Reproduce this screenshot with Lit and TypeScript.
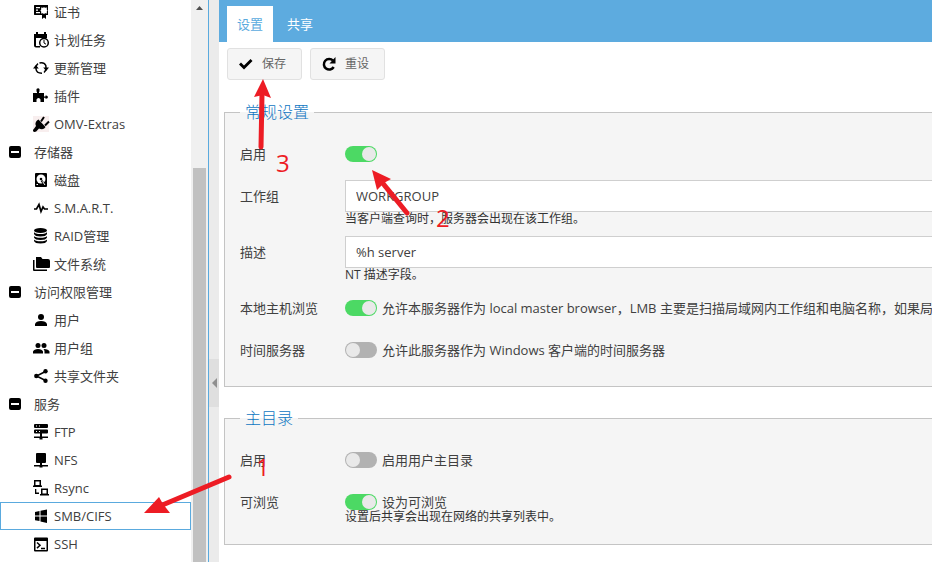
import { LitElement, html, css, svg, nothing } from "lit";
import { customElement, property, state } from "lit/decorators.js";
import { classMap } from "lit/directives/class-map.js";

const icons: Record<string, unknown> = {
  cert: svg`<path fill-rule="evenodd" d="M1.500 1h13.500v10h-2v4l-2-1.500-2 1.500v-4H1.500Q1 11 1 10V2q0-1 .500-1zM3 3v1.200h4V3zM3 5.500v1.200h2V5.500zM3 8v1.200h4V8zM11 3.200 9.800 3.800 8 3.500 8.300 5.200 7.400 6.500 8.300 7.800 8 9.500 9.800 9.200 11 10 12.200 9.200 14 9.500 13.700 7.800 14.500 6.500 13.700 5.200 14 3.500 12.200 3.800z"/>`,
  calendar: svg`<path d="M1 2h2V0h2v2h6V0h2v2h1v4H3v8h4v1.500H3q-2 0-2-2z"/><circle cx="11" cy="10.800" r="4.300" fill="#fff" stroke="#000" stroke-width="1.500"/><path d="M11 8v3l2 1.200" fill="none" stroke="#000"/>`,
  refresh: svg`<path d="M6.500 3Q11 1.800 12.800 5.500L13 8M3 8V9q.500 4.300 6 4.200M3 8Q3 5 5 3.700M13 8q0 3-2 4.500" fill="none" stroke="#000" stroke-width="1.500" stroke-dasharray="none"/><path d="M0 8.500 2.800 5 5.800 8.500zM10.200 7.500H16L13.200 11z"/>`,
  puzzle: svg`<path d="M0 5h4V3.800H3.500V1q1.700-1.500 3 0v2.800H6V5h5v3.500h1.500v-1q2-.500 2.500 1.500 0 2-2.500 1.800V9.800H11V14H7.500v-2.500q-.500-1.500-2-1.500T3.500 11.500V14H0z"/>`,
  plug: svg`<path fill="#f8eeee" d="M0 0h16v16H0z"/><path d="m4 4.500 1.500-1 7 7.500-1 1.300Q9 14 6 12.500L3.200 15.500Q1 16.500 0 15q-.200-1.500 1-2.200L3 10Q1.500 7 4 4.500z"/><path d="M8 5.500 11 1M12 9.500l4-4" fill="none" stroke="#000" stroke-width="2"/>`,
  minus: svg`<path fill-rule="evenodd" d="M4 2h8q2 0 2 2v8q0 2-2 2H4q-2 0-2-2V4q0-2 2-2zM4 7v2h8V7z"/>`,
  disk: svg`<rect x="2" y="1" width="12" height="14" rx="1"/><circle cx="8" cy="7" r="4.500" fill="#fff"/><circle cx="8" cy="7" r="1.300"/><path d="m8.500 8.500 3.500 5" stroke="#000" stroke-width="2"/><path d="M3.500 12.500h1.500M12 13l-2.500-3.500" stroke="#fff"/>`,
  pulse: svg`<path d="M1 9h2.500L6 4.500 8 11.500 10 7l1.500 2H15" fill="none" stroke="#000" stroke-width="1.700"/>`,
  database: svg`<ellipse cx="7.500" cy="2.500" rx="6.500" ry="2.500"/><path d="M1 4q1 2 6.500 2T14 4v2q-1 2.500-6.500 2.500T1 6zM1 8q1 1.800 6.500 1.800T14 8v1.500q-1 2.500-6.500 2.500T1 9.500zM1 11.500q1 1.800 6.500 1.800T14 11.500V13q-1 2.500-6.500 2.500T1 13z"/>`,
  folders: svg`<path d="M3 1h5l1.500 2H15q2 0 2 2v6q0 1-1 1H4q-1 0-1-1zM0 4h1.500v9.500H14V15H1q-1 0-1-1z"/>`,
  user: svg`<circle cx="8" cy="5" r="3"/><path d="M2 14v-2q1-3 6-3t6 3v2z"/>`,
  users: svg`<circle cx="5" cy="5.500" r="2.500"/><circle cx="11" cy="5.500" r="2.500"/><path d="M0 13.500v-2Q1 9 5 9t5 2.500v2zM11 9q4.500 0 5.500 2.500v2h-5v-2Q11.500 10 10.500 9z"/>`,
  share: svg`<path d="M12.500 3.500 3.500 8l9 4.500" fill="none" stroke="#000" stroke-width="1.500"/><circle cx="12.500" cy="3.200" r="2.200"/><circle cx="3.300" cy="8" r="2.200"/><circle cx="12.500" cy="12.800" r="2.200"/>`,
  servers: svg`<path fill-rule="evenodd" d="M2 0h12q1 0 1 1v2q0 1-1 1H2Q1 4 1 3V1q0-1 1-1zM3 1.500v1h1v-1zM6 1.500v1h1v-1zM2 5.500h12q1 0 1 1v2q0 1-1 1H9v3h6V14H9.500v1.500h-3V14H1v-1.500h6v-3H2q-1 0-1-1v-2q0-1 1-1zM3 7v1h1V7zM6 7v1h1V7z"/>`,
  nfs: svg`<path d="M4 1h8q1 0 1 1v8q0 1-1 1H9v2h6v1.500H9.500v1h-3v-1H1V13h6v-2H4q-1 0-1-1V2q0-1 1-1z"/>`,
  rsync: svg`<path fill-rule="evenodd" d="M1 0h7v5.500h1V7H0V5.500h1zM2.500 1.500V5h4V1.500zM8 8.500h7V14h1v1.500H7V14h1zM9.500 10v3.500h4V10zM2 9h1.300v3.500H6V14H2z"/>`,
  windows: svg`<path d="M2 4l4.500-1v4.500H2zM7.500 2.800 14 1.500v6H7.500zM2 8.500h4.500V13L2 12.200zM7.500 8.500H14V15l-6.500-1.500z"/>`,
  terminal: svg`<path fill-rule="evenodd" d="M2 1.500h12q1 0 1 1v12q0 1-1 1H2q-1 0-1-1v-12q0-1 1-1zM2.500 5v9h11V5z"/><path d="m4 6.500 3 2.800-3 2.800M8 12.500h4" fill="none" stroke="#000" stroke-width="1.500"/>`,
  check: svg`<path d="M1 8.500 3 6.500l3 3L12.500 3l2 2L6 13.500z"/>`,
  reset: svg`<path d="M12 4.500A5.300 5.300 0 1 0 12.700 11" fill="none" stroke="#000" stroke-width="2.500"/><path d="M14.500 1v6.500H8.500z"/>`,
};

const icon = (name: string) =>
  html`<svg class="icon" viewBox="0 0 16 16" aria-hidden="true">${icons[name]}</svg>`;

interface Item {
  icon: string;
  text: string;
  group?: boolean;
}

const items: Item[] = [
  { icon: "cert", text: "证书" },
  { icon: "calendar", text: "计划任务" },
  { icon: "refresh", text: "更新管理" },
  { icon: "puzzle", text: "插件" },
  { icon: "plug", text: "OMV-Extras" },
  { icon: "minus", text: "存储器", group: true },
  { icon: "disk", text: "磁盘" },
  { icon: "pulse", text: "S.M.A.R.T." },
  { icon: "database", text: "RAID管理" },
  { icon: "folders", text: "文件系统" },
  { icon: "minus", text: "访问权限管理", group: true },
  { icon: "user", text: "用户" },
  { icon: "users", text: "用户组" },
  { icon: "share", text: "共享文件夹" },
  { icon: "minus", text: "服务", group: true },
  { icon: "servers", text: "FTP" },
  { icon: "nfs", text: "NFS" },
  { icon: "rsync", text: "Rsync" },
  { icon: "windows", text: "SMB/CIFS" },
  { icon: "terminal", text: "SSH" },
];

const base = css`
  * {
    box-sizing: border-box;
  }
  button,
  input {
    font: inherit;
    color: inherit;
    margin: 0;
  }
  .icon {
    width: 16px;
    height: 16px;
    flex: none;
    overflow: visible;
  }
`;

@customElement("nav-tree")
class NavTree extends LitElement {
  @state() selected = "SMB/CIFS";

  static styles = [
    base,
    css`
      :host {
        display: flex;
        flex: none;
        width: 209px;
        overflow: hidden;
        border-right: 1px solid #5aaade;
        background: #fff;
      }
      .tree {
        flex: 1;
        list-style: none;
        margin: -2px 0 0;
        padding: 0;
      }
      .row {
        display: flex;
        align-items: center;
        gap: 5px;
        width: 100%;
        height: 28px;
        padding: 0 0 0 32px;
        border: 1px solid transparent;
        background: none;
        color: #404040;
        text-decoration: none;
        text-align: left;
        white-space: nowrap;
      }
      .group {
        padding-left: 6px;
        gap: 11px;
      }
      .selected {
        border-color: #5aaade;
      }
      .bar {
        width: 17px;
        padding: 0 2px;
        background: #f0f0f0;
        display: flex;
        flex-direction: column;
        align-items: center;
      }
      .up {
        width: 7px;
        height: 4px;
        margin: 6px 0 0;
        background: #505050;
        clip-path: polygon(50% 0, 100% 100%, 0 100%);
      }
      .thumb {
        width: 13px;
        flex: 1;
        margin-top: 158px;
        background: #c1c1c1;
      }
    `,
  ];

  render() {
    return html`
      <ul class="tree">
        ${items.map((it) =>
          it.group
            ? html`<li><button class="row group" type="button" aria-expanded="true">${icon(it.icon)}<span>${it.text}</span></button></li>`
            : html`<li>
                <a
                  href="#"
                  class=${classMap({ row: true, selected: it.text === this.selected })}
                  @click=${(e: Event) => {
                    e.preventDefault();
                    this.selected = it.text;
                  }}
                  >${icon(it.icon)}<span>${it.text}</span></a
                >
              </li>`
        )}
      </ul>
      <div class="bar"><div class="up"></div><div class="thumb"></div></div>
    `;
  }
}

@customElement("form-row")
class FormRow extends LitElement {
  @property() label = "";
  @property() value = "";
  @property() hint = "";
  @property() text = "";
  @property({ type: Boolean }) toggle = false;
  @property({ type: Boolean }) on = false;

  static styles = [
    base,
    css`
      :host {
        display: flex;
      }
      .label {
        flex: none;
        width: 105px;
        line-height: 32px;
      }
      .field {
        flex: 1;
        white-space: nowrap;
      }
      .input {
        display: block;
        width: 100%;
        height: 32px;
        padding: 0 10px;
        border: 1px solid #cfcfcf;
        background: #fff;
      }
      .hint {
        font-size: 12px;
        line-height: 14px;
        color: #333;
      }
      .toggle {
        display: flex;
        align-items: center;
        gap: 5px;
        height: 16px;
        margin: 8px 0;
      }
      .hinted {
        margin-bottom: 0;
      }
      .switch {
        appearance: none;
        flex: none;
        display: flex;
        width: 32px;
        height: 16px;
        padding: 1px;
        border-radius: 8px;
        background: #b2b2b2;
      }
      .switch::before {
        content: "";
        width: 14px;
        height: 14px;
        border-radius: 50%;
        background: #e9e9e9;
      }
      .switch:checked {
        background: #4cd964;
        justify-content: flex-end;
      }
    `,
  ];

  render() {
    return html`
      <label class="label" for="field">${this.label}</label>
      <div class="field">
        ${this.toggle
          ? html`<div class=${classMap({ toggle: true, hinted: !!this.hint })}>
              <input id="field" class="switch" type="checkbox" .checked=${this.on} />
              ${this.text ? html`<label for="field">${this.text}</label>` : nothing}
            </div>`
          : html`<input id="field" class="input" type="text" .value=${this.value} />`}
        ${this.hint ? html`<div class="hint">${this.hint}</div>` : nothing}
      </div>
    `;
  }
}

@customElement("app-root")
class AppRoot extends LitElement {
  static styles = [
    base,
    css`
      :host {
        display: flex;
        position: relative;
        height: 100vh;
        overflow: hidden;
        background: #fff;
        color: #404040;
        font: 400 13px/18px "Open Sans", "Noto Sans CJK SC", sans-serif;
      }
      .splitter {
        flex: none;
        display: flex;
        flex-direction: column;
        justify-content: center;
        width: 10px;
        padding-top: 204px;
        background: #ebebeb;
      }
      .collapse {
        display: flex;
        align-items: center;
        justify-content: flex-end;
        height: 48px;
        padding: 0 2px;
        border: 0;
        background: #dfdfdf;
      }
      .collapse::before {
        content: "";
        width: 5px;
        height: 10px;
        background: #8f8f8f;
        clip-path: polygon(0 50%, 100% 0, 100% 100%);
      }
      .main {
        flex: 1;
        min-width: 0;
        overflow: hidden;
      }
      .tabs {
        display: flex;
        gap: 4px;
        height: 42px;
        padding: 6px 8px 0;
        background: #5dabdf;
      }
      .tab {
        padding: 0 10px;
        border: 0;
        background: none;
        color: #fff;
      }
      .active {
        background: #fff;
        color: #5aaade;
      }
      .tools {
        display: flex;
        gap: 8px;
        padding: 6px 8px 0;
      }
      .tool {
        display: flex;
        align-items: center;
        gap: 8px;
        height: 32px;
        padding: 0 15px 0 10px;
        border: 1px solid #e1e1e1;
        border-radius: 3px;
        background: #f5f5f5;
        color: #666;
        font-size: 12px;
      }
      .form {
        display: flex;
        flex-direction: column;
        gap: 21px;
        width: max-content;
        min-width: 100%;
        padding: 22px 5px 16px;
      }
      .set {
        display: flex;
        flex-direction: column;
        gap: 10px;
        margin: 0;
        padding: 15px 15px 20px;
        border: 1px solid #c4c4c4;
        background: #f5f5f5;
      }
      .legend {
        padding: 0 5px;
        font-size: 16px;
        line-height: 21px;
        font-weight: 300;
        color: #0f76c2;
      }
      .notes {
        position: absolute;
        left: 0;
        top: 0;
        width: 932px;
        height: 562px;
        pointer-events: none;
        fill: #ed1c24;
        font-family: "Open Sans", sans-serif;
        font-size: 24px;
        font-weight: 400;
      }
      .shaft {
        stroke: #ed1c24;
        stroke-width: 5px;
        stroke-linecap: round;
      }
    `,
  ];

  render() {
    return html`
      <nav-tree></nav-tree>
      <div class="splitter"><button class="collapse" type="button" aria-label="折叠"></button></div>
      <main class="main">
        <div class="tabs" role="tablist">
          <button class="tab active" role="tab" aria-selected="true">设置</button>
          <button class="tab" role="tab" aria-selected="false">共享</button>
        </div>
        <div class="tools">
          <button class="tool" type="button">${icon("check")}<span>保存</span></button>
          <button class="tool" type="button">${icon("reset")}<span>重设</span></button>
        </div>
        <form class="form">
          <fieldset class="set">
            <legend class="legend">常规设置</legend>
            <form-row label="启用" toggle on></form-row>
            <form-row label="工作组" value="WORKGROUP" hint="当客户端查询时，服务器会出现在该工作组。"></form-row>
            <form-row label="描述" value="%h server" hint="NT 描述字段。"></form-row>
            <form-row
              label="本地主机浏览"
              toggle
              on
              text="允许本服务器作为 local master browser，LMB 主要是扫描局域网内工作组和电脑名称，如果局域网"
            ></form-row>
            <form-row label="时间服务器" toggle text="允许此服务器作为 Windows 客户端的时间服务器"></form-row>
          </fieldset>
          <fieldset class="set">
            <legend class="legend">主目录</legend>
            <form-row label="启用" toggle text="启用用户主目录"></form-row>
            <form-row label="可浏览" toggle on text="设为可浏览" hint="设置后共享会出现在网络的共享列表中。"></form-row>
          </fieldset>
        </form>
      </main>
      <svg class="notes" viewBox="0 0 932 562">
        <path class="shaft" d="M229 477 160 506M407 213 381 181M261 147 262 94" />
        <path d="M144 513 159 497 163 504 170 513zM372 170 391 179 384 183 377 190zM263 79 271 98 263 95 254 97z" />
        <text x="256" y="476">1</text>
        <text x="436" y="227">2</text>
        <text x="276" y="172">3</text>
      </svg>
    `;
  }
}
